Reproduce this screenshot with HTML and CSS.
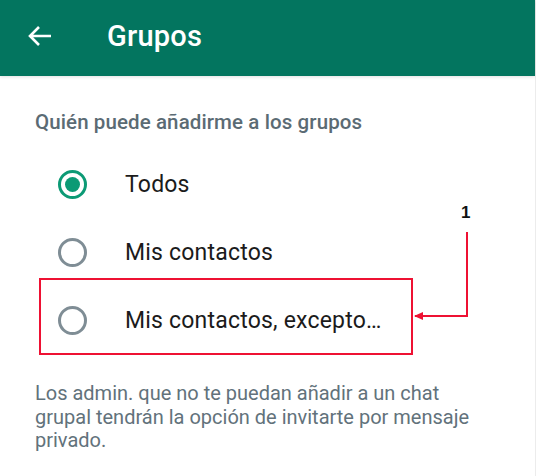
FILE: index.html
```html
<!DOCTYPE html>
<html lang="es">
<head>
<meta charset="utf-8">
<link rel="stylesheet" href="styles.css">
</head>
<body>
<div class="screen">
  <header class="appbar">
    <svg class="back" width="26" height="22" viewBox="0 0 26 22"><path d="M24 11H3M12 2L3 11l9 9" fill="none" stroke="#fff" stroke-width="2.6" stroke-linecap="butt"/></svg>
    <h1 class="title">Grupos</h1>
  </header>
  <main class="content">
    <h2 class="section">Quién puede añadirme a los grupos</h2>
    <ul class="options">
      <li class="option"><span class="radio checked"></span><span class="label">Todos</span></li>
      <li class="option"><span class="radio"></span><span class="label">Mis contactos</span></li>
      <li class="option"><span class="radio"></span><span class="label">Mis contactos, excepto…</span></li>
    </ul>
    <p class="note">Los admin. que no te puedan añadir a un chat grupal tendrán la opción de invitarte por mensaje privado.</p>
  </main>
  <div class="callout-box"></div>
  <span class="callout-num">1</span>
  <svg class="callout-arrow" width="70" height="100" viewBox="0 0 70 100"><path d="M55 2V86H3" fill="none" stroke="#ee1133" stroke-width="2"/><path d="M2 86l9-4v8z" fill="#ee1133"/></svg>
</div>
</body>
</html>
```
FILE: styles.css
```css
* { box-sizing: border-box; margin: 0; padding: 0; }
html, body { width: 536px; height: 476px; overflow: hidden; background: #fff; }
body { font-family: Roboto, "Noto Sans", sans-serif; }
.screen { position: relative; width: 536px; height: 476px; border-right: 1px solid #ececec; }
.appbar {
  height: 76px;
  background: #03755f;
  display: flex;
  align-items: center;
  padding-left: 27px;
  box-shadow: 0 1px 3px rgba(0,0,0,0.12);
}
.back { display: block; margin-top: -4px; }
.title {
  margin-left: 54px;
  color: #fff;
  font-size: 29px;
  font-weight: 500;
  letter-spacing: 0.2px;
  margin-top: -4px;
}
.content { padding: 34px 0 0 35px; }
.section {
  font-size: 20.5px;
  font-weight: 500;
  color: #5b6b74;
  line-height: 24px;
  letter-spacing: 0.1px;
}
.options { list-style: none; margin-top: 16px; }
.option {
  height: 68px;
  display: flex;
  align-items: center;
  padding-left: 23px;
}
.radio {
  width: 29px; height: 29px;
  border: 3px solid #7f8d95;
  border-radius: 50%;
  flex: none;
  position: relative;
}
.radio.checked { border-color: #0c9a75; }
.radio.checked::after {
  content: "";
  position: absolute;
  left: 4px; top: 4px;
  width: 15px; height: 15px;
  border-radius: 50%;
  background: #0c9a75;
}
.label {
  margin-left: 38px;
  font-size: 23px;
  color: #1b1b1b;
  letter-spacing: 0.2px;
}
.note {
  margin-top: 28px;
  width: 462px;
  font-size: 20px;
  line-height: 23.5px;
  color: #62727b;
}
.callout-box {
  position: absolute;
  left: 39px; top: 278px;
  width: 374px; height: 77px;
  border: 2px solid #ee1133;
}
.callout-num {
  position: absolute;
  left: 461px; top: 203px;
  font-size: 17px;
  font-weight: 700;
  color: #111;
  font-family: "Liberation Sans", Arial, sans-serif;
}
.callout-arrow {
  position: absolute;
  left: 412px; top: 230px;
}
```
